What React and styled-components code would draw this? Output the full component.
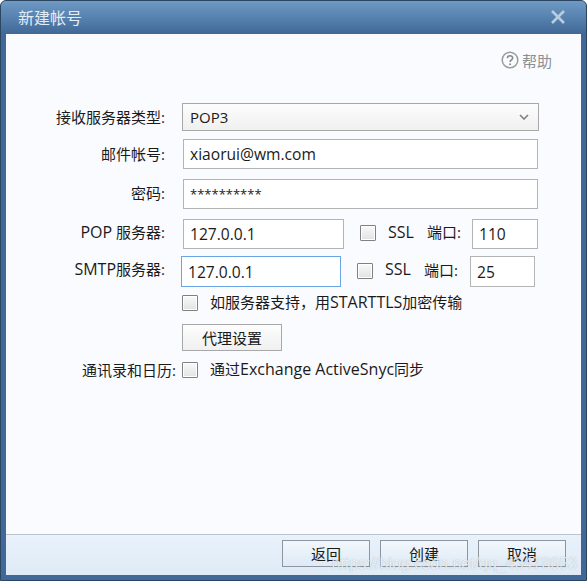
import styled, { createGlobalStyle } from 'styled-components'

const GlobalStyle = createGlobalStyle`
  html, body {
    margin: 0;
    padding: 0;
    background: #ffffff;
  }

  body {
    font-family: "Open Sans", "Noto Sans CJK SC", sans-serif;
    font-size: 15px;
    color: #1a1a1a;
  }

  * {
    box-sizing: border-box;
  }
`

const Dialog = styled.div`
  position: relative;
  width: 587px;
  height: 581px;
  display: flex;
  flex-direction: column;
  background: #40699a;
  border: 1px solid #2c4560;
  border-radius: 6px 6px 0 0;
  overflow: hidden;
`

const TitleBar = styled.div`
  height: 33px;
  flex: none;
  display: flex;
  align-items: center;
  justify-content: space-between;
  padding: 0 20px 2px 17px;
  background: linear-gradient(#6f9ac5 0%, #3f6897 100%);
  color: #e3edf6;
  font-size: 16px;
`

const CloseIcon = styled.svg`
  width: 16px;
  height: 16px;
  display: block;
`

const Body = styled.div`
  flex: 1;
  display: flex;
  flex-direction: column;
  margin: 0 5px 5px 5px;
  background: #fafbff;
`

const Main = styled.div`
  flex: 1;
  padding-top: 15px;
`

const HelpLink = styled.div`
  display: flex;
  justify-content: flex-end;
  align-items: center;
  gap: 3px;
  height: 22px;
  padding-right: 29px;
  margin-bottom: 32px;
  color: #8b8f94;
  font-size: 15px;
`

const HelpIcon = styled.svg`
  width: 18px;
  height: 18px;
  display: block;
`

const Row = styled.div`
  display: flex;
  align-items: center;
  height: ${({ $h }) => $h}px;
  margin-bottom: ${({ $mb }) => $mb}px;
`

const Label = styled.div`
  width: ${({ $w }) => $w || 160}px;
  margin-right: ${({ $mr }) => $mr || 0}px;
  padding: 0 1px ${({ $pb }) => $pb ?? 2}px 0;
  flex: none;
  text-align: right;
  white-space: nowrap;
`

const Latin = styled.span`
  font-size: 16px;
`

const Select = styled.div`
  width: 357px;
  height: 28px;
  margin-left: 16px;
  display: flex;
  align-items: center;
  justify-content: space-between;
  padding: 0 9px 0 7px;
  border: 1px solid #a8a8a8;
  background: linear-gradient(#fdfdfd, #f0f0f0);
`

const Chevron = styled.svg`
  width: 10px;
  height: 6px;
  display: block;
`

const Input = styled.input`
  display: block;
  flex: none;
  width: ${({ $w }) => $w}px;
  height: ${({ $h }) => $h || 30}px;
  margin-left: ${({ $ml }) => $ml || 0}px;
  padding: 0 6px;
  border: 1px solid ${({ $focus }) => ($focus ? '#6aa5e8' : '#b4b4b4')};
  border-radius: 0;
  outline: none;
  background: #ffffff;
  font-family: inherit;
  font-size: ${({ $size }) => $size || 15.6}px;
  color: #1a1a1a;
`

const Check = styled.span`
  display: block;
  flex: none;
  width: 16px;
  height: 16px;
  margin-left: ${({ $ml }) => $ml}px;
  margin-bottom: ${({ $mb }) => $mb || 0}px;
  border: 1px solid #808080;
  border-radius: 1px;
  background: linear-gradient(#f9f9f9, #e2e2e2);
  box-shadow: inset 0 0 0 1px #ffffff;
`

const Text = styled.span`
  flex: none;
  width: ${({ $w }) => ($w ? `${$w}px` : 'auto')};
  margin-left: ${({ $ml }) => $ml || 0}px;
  padding-bottom: ${({ $pb }) => $pb ?? 2}px;
  white-space: nowrap;
`

const Button = styled.button`
  display: block;
  width: ${({ $w }) => $w}px;
  height: 27px;
  flex: none;
  margin-left: ${({ $ml }) => $ml || 0}px;
  padding: 0;
  border: 1px solid ${({ $footer }) => ($footer ? '#8d96a0' : '#a8a8a8')};
  border-radius: 0;
  background: ${({ $footer }) =>
    $footer ? 'linear-gradient(#f2f7fc, #deeaf6)' : 'linear-gradient(#fdfdfd, #f0f0f0)'};
  font-family: inherit;
  font-size: 15px;
  color: #1a1a1a;
`

const Footer = styled.div`
  height: 41px;
  flex: none;
  display: flex;
  justify-content: flex-end;
  align-items: flex-start;
  gap: 10px;
  padding: 5px 15px 0 0;
  border-top: 1px solid #bcc5cf;
  background: linear-gradient(#e9f2fb, #deeaf6);
`

const Watermark = styled.div`
  position: absolute;
  right: 9px;
  bottom: 7px;
  font-family: "Liberation Sans", sans-serif;
  font-size: 16px;
  color: rgba(255, 255, 255, 0.75);
  text-shadow: 0 0 1px rgba(110, 125, 140, 0.55);
  white-space: nowrap;
  pointer-events: none;
`

export default function App() {
  return (
    <>
      <GlobalStyle />
      <Dialog>
        <TitleBar>
          <span>新建帐号</span>
          <CloseIcon viewBox="0 0 16 16">
            <path d="M2 2 L14 14 M14 2 L2 14" stroke="#b9cde0" strokeWidth="2.6" fill="none" />
          </CloseIcon>
        </TitleBar>
        <Body>
          <Main>
            <HelpLink>
              <HelpIcon viewBox="0 0 18 18">
                <circle cx="9" cy="9" r="7.8" fill="none" stroke="#9a9a9a" strokeWidth="1.5" />
                <path
                  d="M6.4 7.2 C6.4 3.9 11.7 3.9 11.7 7 C11.7 8.8 9.1 8.9 9.1 11"
                  fill="none"
                  stroke="#8a8a8a"
                  strokeWidth="1.6"
                />
                <circle cx="9.1" cy="13.3" r="1" fill="#8a8a8a" />
              </HelpIcon>
              <span>帮助</span>
            </HelpLink>

            <Row $h={28} $mb={8}>
              <Label>接收服务器类型:</Label>
              <Select>
                POP3
                <Chevron viewBox="0 0 10 6">
                  <path d="M1 1 L5 5 L9 1" fill="none" stroke="#808080" strokeWidth="1.6" />
                </Chevron>
              </Select>
            </Row>
            <Row $h={30} $mb={10}>
              <Label>邮件帐号:</Label>
              <Input $w={355} $ml={17} defaultValue="xiaorui@wm.com" />
            </Row>
            <Row $h={30} $mb={10}>
              <Label $pb={4}>密码:</Label>
              <Input $w={355} $ml={17} $size={13} defaultValue="**********" />
            </Row>
            <Row $h={30} $mb={7}>
              <Label $pb={5}><Latin>POP</Latin> 服务器:</Label>
              <Input $w={161} $ml={17} defaultValue="127.0.0.1" />
              <Check $ml={16} $mb={2} />
              <Text $ml={12} $w={39} $pb={5}><Latin>SSL</Latin></Text>
              <Text $w={45} $pb={5}>端口:</Text>
              <Input $w={66} defaultValue="110" />
            </Row>
            <Row $h={31} $mb={8}>
              <Label $pb={5}><Latin>SMTP</Latin>服务器:</Label>
              <Input $w={160} $h={31} $ml={15} $focus defaultValue="127.0.0.1" />
              <Check $ml={16} $mb={2} />
              <Text $ml={12} $w={39} $pb={5}><Latin>SSL</Latin></Text>
              <Text $w={46} $pb={5}>端口:</Text>
              <Input $w={65} $h={31} defaultValue="25" />
            </Row>
            <Row $h={16} $mb={13}>
              <Check $ml={176} />
              <Text $ml={12}>如服务器支持，用<Latin>STARTTLS</Latin>加密传输</Text>
            </Row>
            <Row $h={27} $mb={11}>
              <Button $ml={176} $w={100}>代理设置</Button>
            </Row>
            <Row $h={16} $mb={0}>
              <Label $w={171} $mr={5}>通讯录和日历:</Label>
              <Check $ml={0} />
              <Text $ml={12}>通过<Latin>Exchange ActiveSnyc</Latin>同步</Text>
            </Row>
          </Main>
          <Footer>
            <Button $footer $w={88}>返回</Button>
            <Button $footer $w={88}>创建</Button>
            <Button $footer $w={88}>取消</Button>
          </Footer>
        </Body>
        <Watermark>https://blog.csdn.net/qq_43478653</Watermark>
      </Dialog>
    </>
  )
}
